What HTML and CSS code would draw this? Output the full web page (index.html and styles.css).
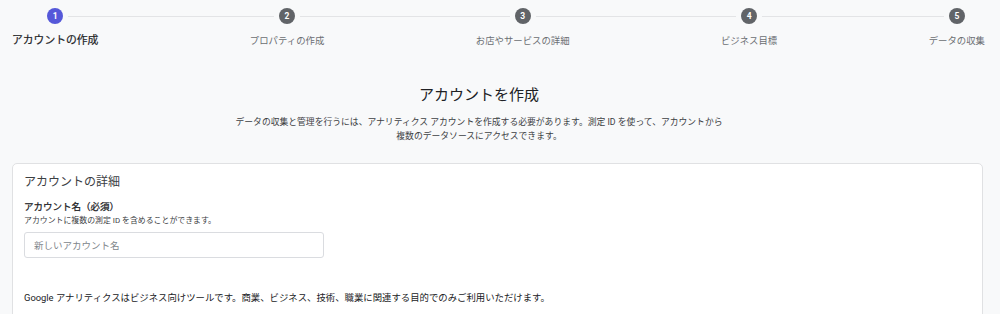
FILE: index.html
```html
<!DOCTYPE html>
<html lang="ja">
<head>
<meta charset="utf-8">
<title>アカウントを作成</title>
<link rel="stylesheet" href="styles.css">
</head>
<body>
<div class="stepper">
  <div class="step active"><span class="circle">1</span><span class="label">アカウントの作成</span></div>
  <div class="step"><span class="circle">2</span><span class="label">プロパティの作成</span></div>
  <div class="step"><span class="circle">3</span><span class="label">お店やサービスの詳細</span></div>
  <div class="step"><span class="circle">4</span><span class="label">ビジネス目標</span></div>
  <div class="step"><span class="circle">5</span><span class="label">データの収集</span></div>
</div>
<div class="intro">
  <h1 class="title">アカウントを作成</h1>
  <p class="desc">データの収集と管理を行うには、アナリティクス アカウントを作成する必要があります。測定 ID を使って、アカウントから<br>複数のデータソースにアクセスできます。</p>
</div>
<div class="card">
  <h2 class="card-title">アカウントの詳細</h2>
  <div class="field-label">アカウント名（必須）</div>
  <div class="field-help">アカウントに複数の測定 ID を含めることができます。</div>
  <input class="field-input" type="text" placeholder="新しいアカウント名">
  <p class="notice">Google アナリティクスはビジネス向けツールです。商業、ビジネス、技術、職業に関連する目的でのみご利用いただけます。</p>
</div>
</body>
</html>
```
FILE: styles.css
```css
* { box-sizing: border-box; }
html, body { margin: 0; padding: 0; }
body {
  background: #f8f9fa;
  font-family: Roboto, "Noto Sans CJK JP", sans-serif;
  color: #202124;
  width: 1000px;
  height: 314px;
  overflow: hidden;
}
.stepper {
  position: relative;
  display: flex;
  justify-content: space-between;
  padding: 8px 15px 0 12px;
}
.stepper::before {
  content: "";
  position: absolute;
  top: 16px;
  left: 55px;
  right: 45px;
  height: 1px;
  background: #e3e4e6;
}
.step {
  display: flex;
  flex-direction: column;
  align-items: center;
  gap: 10px;
  position: relative;
}
.circle {
  width: 16px;
  height: 16px;
  border-radius: 50%;
  background: #616468;
  color: #fff;
  font-size: 8.5px;
  font-weight: 700;
  display: flex;
  align-items: center;
  justify-content: center;
  box-shadow: 0 0 0 5px #f8f9fa;
}
.step.active .circle { background: #5558d9; }
.label {
  font-size: 9.4px;
  line-height: 14px;
  color: #6b6e72;
}
.step.active .label {
  font-size: 10.8px;
  font-weight: 400;
  color: #202124;
  -webkit-text-stroke: 0.2px #202124;
}
.intro {
  text-align: center;
  padding-right: 42px;
}
.title {
  margin: 37px 0 0;
  font-size: 15px;
  line-height: 20px;
  font-weight: 400;
  color: #202124;
}
.desc {
  margin: 10px 0 0;
  font-size: 8.8px;
  line-height: 14px;
  color: #3c4043;
}
.card {
  margin: 20px 17px 0 12px;
  background: #fff;
  border: 1px solid #e0e1e3;
  border-radius: 5px;
  padding: 10px 11px 40px;
  height: 200px;
}
.card-title {
  margin: 0;
  font-size: 12px;
  line-height: 16px;
  font-weight: 400;
  color: #3c4043;
}
.field-label {
  margin-top: 10px;
  font-size: 9.5px;
  line-height: 14px;
  font-weight: 400;
  color: #202124;
  -webkit-text-stroke: 0.25px #202124;
}
.field-help {
  margin-top: 2px;
  font-size: 7.9px;
  line-height: 10px;
  color: #3c4043;
}
.field-input {
  display: block;
  margin-top: 6px;
  width: 300px;
  height: 26px;
  border: 1px solid #dadce0;
  border-radius: 3px;
  padding: 0 9px;
  font-family: inherit;
  font-size: 9.5px;
  color: #202124;
  background: #fff;
}
.field-input::placeholder { color: #80868b; }
.notice {
  margin: 33px 0 0;
  font-size: 9.4px;
  line-height: 14px;
  color: #202124;
}
```
